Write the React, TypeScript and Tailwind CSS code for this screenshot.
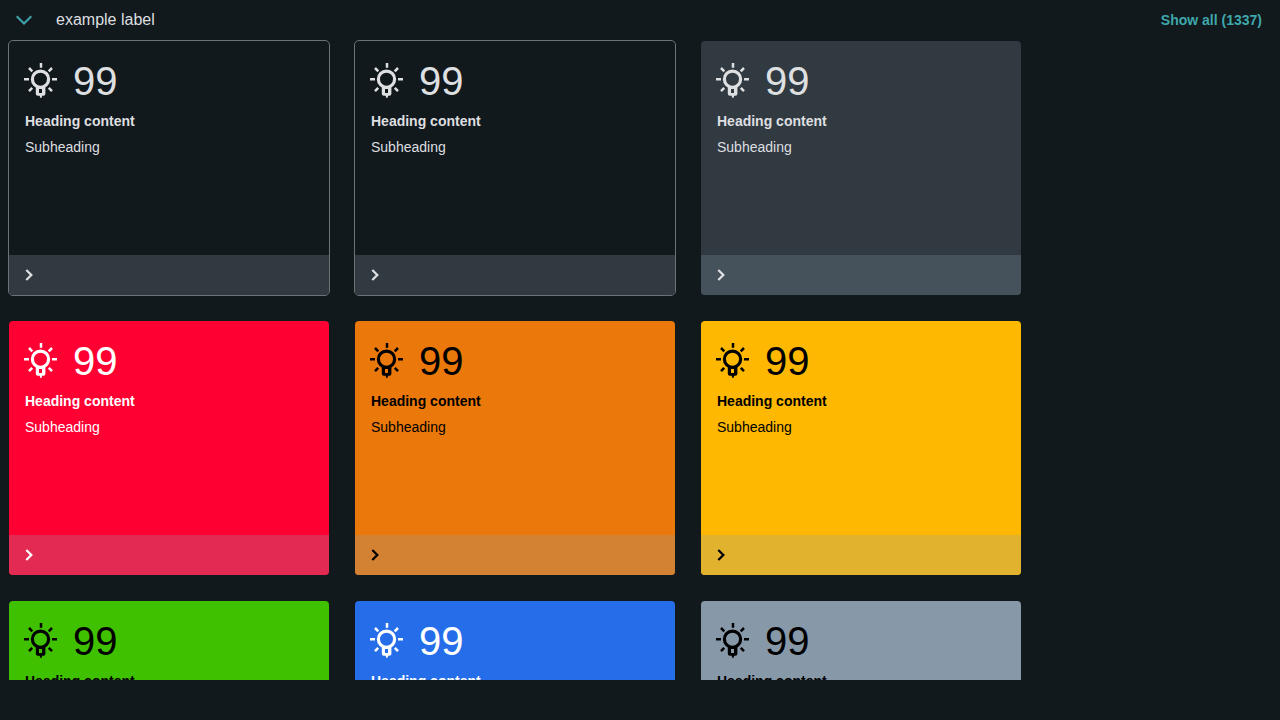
import { useState } from 'react';

type Tile = { card: string; footer: string };

const tiles: Tile[] = [
  { card: 'border-[#6c7375] text-[#dedfe0]', footer: 'bg-[#303a40]' },
  { card: 'border-[#6c7375] text-[#dedfe0]', footer: 'bg-[#303a40]' },
  { card: 'border-transparent bg-[#303a40] text-[#dedfe0]', footer: 'bg-[#46525b]' },
  { card: 'border-transparent bg-[#ff0033] text-white', footer: 'bg-[#e22a52]' },
  { card: 'border-transparent bg-[#eb780a] text-black', footer: 'bg-[#d28232]' },
  { card: 'border-transparent bg-[#ffb802] text-black', footer: 'bg-[#e0b22d]' },
  { card: 'border-transparent bg-[#40c100] text-black', footer: 'bg-[#4cb31c]' },
  { card: 'border-transparent bg-[#266ee9] text-white', footer: 'bg-[#3c76d8]' },
  { card: 'border-transparent bg-[#8799a9] text-black', footer: 'bg-[#95a5b2]' },
];

function BulbIcon() {
  return (
    <svg className="size-10 shrink-0" viewBox="0 0 40 40" fill="none" aria-hidden="true">
      <circle cx="20.5" cy="19.2" r="8.1" stroke="currentColor" strokeWidth="3.2" />
      <path
        d="M21 3v4.8M4 19.2h5M32 19.2h5M9 8l3.3 3.3M32 8l-3.3 3.3M9 31.2l3.2-3.4M32 31.2l-3.2-3.4"
        stroke="currentColor"
        strokeWidth="2.5"
      />
      <path
        d="M15.8 26h9.6v7.7q0 2-2 2h-1.2l-.8 2.2h-1l-.8-2.2h-1.8q-2 0-2-2zM19 29v4h3v-4z"
        fill="currentColor"
        fillRule="evenodd"
      />
    </svg>
  );
}

function TileCard({ tile }: { tile: Tile }) {
  return (
    <article
      className={`flex h-64 w-[322px] shrink-0 flex-col overflow-hidden rounded-[5px] border bg-clip-padding ${tile.card}`}
    >
      <div className="flex-1 pt-[19px]">
        <div className="flex items-start gap-[13px] pl-[11px]">
          <BulbIcon />
          <span className="text-[40px] leading-[42px]">99</span>
        </div>
        <h2 className="mt-[9px] px-4 text-sm font-bold">Heading content</h2>
        <p className="mt-1.5 px-4 text-sm">Subheading</p>
      </div>
      <button
        type="button"
        aria-label="Open"
        className={`flex h-10 w-full shrink-0 items-center px-3 ${tile.footer}`}
      >
        <svg className="size-4" viewBox="0 0 16 16" fill="none" aria-hidden="true">
          <path d="M5.3 3l5 5-5 5" stroke="currentColor" strokeWidth="2.3" />
        </svg>
      </button>
    </article>
  );
}

export default function App() {
  const [open, setOpen] = useState(true);

  return (
    <main className="flex h-screen flex-col bg-[#11191c] pb-10 font-['Liberation_Sans',Arial,sans-serif]">
      <header className="flex h-10 shrink-0 items-center pr-[18px] pl-4 text-[#dedfe0]">
        <button
          type="button"
          aria-label="Toggle section"
          aria-expanded={open}
          onClick={() => setOpen(!open)}
          className="text-[#3fa7ab]"
        >
          <svg className="size-4" viewBox="0 0 16 16" fill="none" aria-hidden="true">
            <path d="M.7 4.2L8 11.5l7.3-7.3" stroke="currentColor" strokeWidth="2" />
          </svg>
        </button>
        <h1 className="ml-6 text-base">example label</h1>
        <a href="#all" className="ml-auto text-sm font-bold text-[#3fa7ab]">
          Show all (1337)
        </a>
      </header>
      {open && (
        <section className="grid min-h-0 flex-1 grid-cols-[repeat(auto-fill,322px)] content-start gap-6 overflow-hidden pr-60 pl-2">
          {tiles.map((tile, i) => (
            <TileCard key={i} tile={tile} />
          ))}
        </section>
      )}
    </main>
  );
}
